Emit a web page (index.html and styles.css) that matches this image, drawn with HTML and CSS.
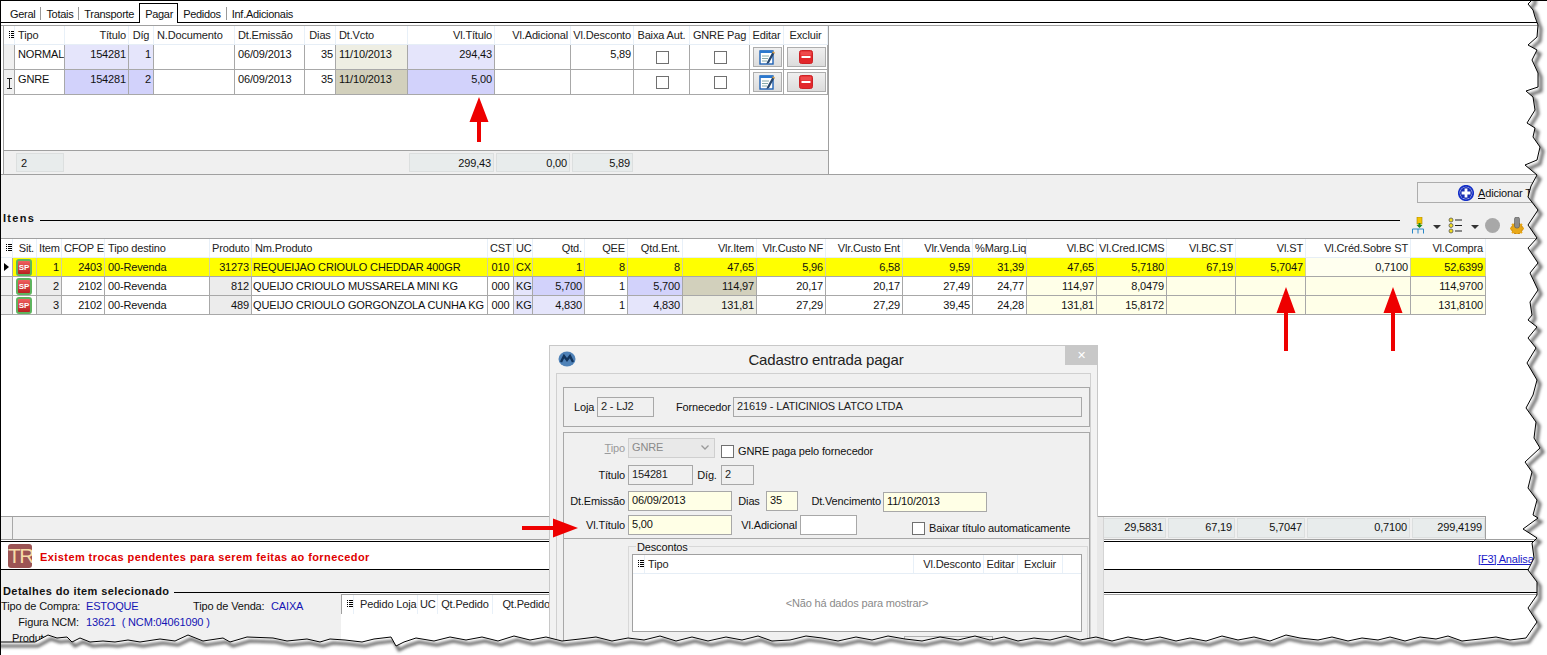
FILE: index.html
```html
<!DOCTYPE html>
<html lang="pt-BR">
<head>
<meta charset="utf-8">
<title>Cadastro entrada pagar</title>
<link rel="stylesheet" href="styles.css">
</head>
<body>
<svg class="defs" width="0" height="0" aria-hidden="true">
  <symbol id="i-list" viewBox="0 0 6 8"><path d="M0 .5h1M2 .5h4M0 2.5h1M2 2.5h4M0 4.5h1M2 4.5h4M0 6.5h1M2 6.5h4" stroke="#000" fill="none"/></symbol>
  <symbol id="i-edit" viewBox="0 0 16 16"><rect x="1" y="2" width="13" height="13" fill="#fff" stroke="#1f62b5" stroke-width="1.4"/><rect x="1" y="1.5" width="13" height="2.5" fill="#2b78cf"/><path d="M3 7h7M3 9.5h6M3 12h5" stroke="#8aa" fill="none"/><path d="M8 13l5.5-10 2 1L10 14l-2.5 1z" fill="#27456b"/><path d="M13.5 3l2 1" stroke="#e0a040" stroke-width="1.4"/></symbol>
  <symbol id="i-del" viewBox="0 0 14 14"><rect x=".5" y=".5" width="13" height="13" rx="2" fill="#e2272b" stroke="#cc2226"/><rect x="1.500" y="1.500" width="11" height="4" rx="1" fill="#ee4a4c"/><rect x="2.500" y="6" width="9" height="2" fill="#fff"/></symbol>
</svg>
<div class="app">
  <nav class="tabs">
    <span class="tab">Geral</span><span class="tab sep">Totais</span><span class="tab sep">Transporte</span><span class="tab on">Pagar</span><span class="tab">Pedidos</span><span class="tab sep">Inf.Adicionais</span>
  </nav>
  <section class="pane">
    <div class="g1">
      <div class="rw g1c head">
        <div class="c hd"><svg class="ic-list"><use href="#i-list"/></svg></div><div class="c hd l">Tipo</div><div class="c hd r">Título</div><div class="c hd ctr">Díg</div><div class="c hd l">N.Documento</div><div class="c hd l">Dt.Emissão</div><div class="c hd ctr">Dias</div><div class="c hd l">Dt.Vcto</div><div class="c hd r">Vl.Título</div><div class="c hd r">Vl.Adicional</div><div class="c hd r">Vl.Desconto</div><div class="c hd ctr">Baixa Aut.</div><div class="c hd ctr">GNRE Pag</div><div class="c hd ctr">Editar</div><div class="c hd ctr">Excluir</div>
      </div>
      <div class="rw g1c tall">
        <div class="c ind"></div><div class="c l">NORMAL</div><div class="c r bl1">154281</div><div class="c r bl1">1</div><div class="c l"></div><div class="c l">06/09/2013</div><div class="c r">35</div><div class="c l kh1">11/10/2013</div><div class="c r bl1">294,43</div><div class="c r"></div><div class="c r">5,89</div><div class="c mid"><span class="chk"></span></div><div class="c mid"><span class="chk"></span></div><div class="c mid"><span class="btn be"><svg class="ic-edit"><use href="#i-edit"/></svg></span></div><div class="c mid"><span class="btn bd"><svg class="ic-del"><use href="#i-del"/></svg></span></div>
      </div>
      <div class="rw g1c tall">
        <div class="c ind mid"><svg class="ic-beam" viewBox="0 0 5 11"><path d="M0 .5h5M0 10.500h5M2.500 .5v10" stroke="#222" fill="none"/></svg></div><div class="c l">GNRE</div><div class="c r bl2">154281</div><div class="c r bl2">2</div><div class="c l"></div><div class="c l">06/09/2013</div><div class="c r">35</div><div class="c l kh2">11/10/2013</div><div class="c r bl2">5,00</div><div class="c r"></div><div class="c r"></div><div class="c mid"><span class="chk"></span></div><div class="c mid"><span class="chk"></span></div><div class="c mid"><span class="btn be"><svg class="ic-edit"><use href="#i-edit"/></svg></span></div><div class="c mid"><span class="btn bd"><svg class="ic-del"><use href="#i-del"/></svg></span></div>
      </div>
      <div class="g1-gap"></div>
      <div class="g1c g1foot">
        <div></div><div class="fc l">2</div><div class="s6"></div><div class="fc r">299,43</div><div class="fc r">0,00</div><div class="fc r">5,89</div>
      </div>
    </div>
  </section>
  <section class="band">
    <div class="addrow"><div class="addbtn">
      <svg class="ic-plus" viewBox="0 0 16 16"><circle cx="8" cy="8" r="7.200" fill="#fff" stroke="#1530c8" stroke-width="1.800"/><circle cx="8" cy="8" r="6" fill="#1a2fb4"/><path d="M8 3.600v8.800M3.600 8h8.800" stroke="#fff" stroke-width="2.800"/></svg>
      <span><u>A</u>dicionar Troca</span>
    </div></div>
    <div class="itens-head">
      <strong class="h-text">Itens</strong>
      <div class="h-line"></div>
      <svg class="tools" viewBox="0 0 115 17" width="115" height="17">
        <rect x="5" y="0" width="5" height="7" fill="#f2c400" stroke="#a88400" stroke-width=".6"/>
        <path d="M7.500 6v4" stroke="#1a8a1a" stroke-width="2"/><path d="M4.500 8h6l-3 3z" fill="#1a8a1a"/>
        <path d="M.5 16.500v-4.500h11v4.500M6 12v4.500" fill="none" stroke="#2a88c8"/>
        <path d="M21 8h8l-4 4z" fill="#333"/>
        <circle cx="39" cy="3" r="2" fill="#f2dc20" stroke="#555" stroke-width=".8"/><circle cx="39" cy="8.500" r="2" fill="#f2dc20" stroke="#555" stroke-width=".8"/><circle cx="39" cy="14" r="2" fill="#f2dc20" stroke="#555" stroke-width=".8"/>
        <path d="M43 3h7M43 8.500h7M43 14h7" stroke="#222" stroke-width="1.200"/>
        <path d="M59 8h8l-4 4z" fill="#333"/>
        <circle cx="80.500" cy="8.500" r="7.500" fill="#a8a8a8"/>
        <circle cx="105" cy="11.500" r="5.500" fill="#e8a818" stroke="#c07c08"/>
        <path d="M98 11.500h14M105 4.500v14M100 7l10 9M110 7l-10 9" stroke="#e8a818" stroke-width="2"/>
        <rect x="102.500" y="0" width="5" height="11" rx="2" fill="#8c8c8c" stroke="#555" stroke-width=".6"/>
      </svg>
    </div>
  </section>
  <section class="items">
    <div class="g2">
      <div class="rw g2c head">
        <div class="c hd"><svg class="ic-list"><use href="#i-list"/></svg></div><div class="c hd r">Sit.</div><div class="c hd r">Item</div><div class="c hd r">CFOP E</div><div class="c hd l">Tipo destino</div><div class="c hd r">Produto</div><div class="c hd l">Nm.Produto</div><div class="c hd ctr">CST</div><div class="c hd ctr">UC</div><div class="c hd r">Qtd.</div><div class="c hd r">QEE</div><div class="c hd r">Qtd.Ent.</div><div class="c hd r">Vlr.Item</div><div class="c hd r">Vlr.Custo NF</div><div class="c hd r">Vlr.Custo Ent</div><div class="c hd r">Vlr.Venda</div><div class="c hd r">%Marg.Liq</div><div class="c hd r">Vl.BC</div><div class="c hd r">Vl.Cred.ICMS</div><div class="c hd r">Vl.BC.ST</div><div class="c hd r">Vl.ST</div><div class="c hd r">Vl.Créd.Sobre ST</div><div class="c hd r">Vl.Compra</div>
      </div>
      <div class="rw g2c cur">
        <div class="c ind mid"><span class="tri"></span></div><div class="c mid yl"><span class="sp">SP</span></div><div class="c r yl">1</div><div class="c r yl">2403</div><div class="c l yl">00-Revenda</div><div class="c r yl">31273</div><div class="c nm yl">REQUEIJAO CRIOULO CHEDDAR 400GR</div><div class="c ctr yl">010</div><div class="c ctr yl">CX</div><div class="c r yl">1</div><div class="c r yl">8</div><div class="c r yl">8</div><div class="c r yl">47,65</div><div class="c r yl">5,96</div><div class="c r yl">6,58</div><div class="c r yl">9,59</div><div class="c r yl">31,39</div><div class="c r yl">47,65</div><div class="c r yl">5,7180</div><div class="c r yl">67,19</div><div class="c r yl">5,7047</div><div class="c r pale">0,7100</div><div class="c r yl">52,6399</div>
      </div>
      <div class="rw g2c">
        <div class="c ind"></div><div class="c mid"><span class="sp">SP</span></div><div class="c r gy">2</div><div class="c r">2102</div><div class="c l">00-Revenda</div><div class="c r gy">812</div><div class="c nm">QUEIJO CRIOULO MUSSARELA MINI KG</div><div class="c ctr">000</div><div class="c ctr bl1">KG</div><div class="c r bl2">5,700</div><div class="c r">1</div><div class="c r bl2">5,700</div><div class="c r kh2">114,97</div><div class="c r">20,17</div><div class="c r">20,17</div><div class="c r">27,49</div><div class="c r">24,77</div><div class="c r cr">114,97</div><div class="c r cr">8,0479</div><div class="c r cr"></div><div class="c r cr"></div><div class="c r cr"></div><div class="c r cr">114,9700</div>
      </div>
      <div class="rw g2c">
        <div class="c ind"></div><div class="c mid"><span class="sp">SP</span></div><div class="c r gy">3</div><div class="c r">2102</div><div class="c l">00-Revenda</div><div class="c r gy">489</div><div class="c nm">QUEIJO CRIOULO GORGONZOLA CUNHA KG</div><div class="c ctr">000</div><div class="c ctr bl1">KG</div><div class="c r bl1">4,830</div><div class="c r">1</div><div class="c r bl1">4,830</div><div class="c r kh1">131,81</div><div class="c r">27,29</div><div class="c r">27,29</div><div class="c r">39,45</div><div class="c r">24,28</div><div class="c r cr">131,81</div><div class="c r cr">15,8172</div><div class="c r cr"></div><div class="c r cr"></div><div class="c r cr"></div><div class="c r cr">131,8100</div>
      </div>
    </div>
  </section>
  <div class="f2wrap">
    <div class="g2c f2">
      <div class="f2first"></div><div class="s17"></div><div class="fc r">29,5831</div><div class="fc r">67,19</div><div class="fc r">5,7047</div><div class="fc r">0,7100</div><div class="fc r">299,4199</div>
    </div>
  </div>
  <section class="alert">
    <span class="tr">TR</span>
    <strong class="alert-text">Existem trocas pendentes para serem feitas ao fornecedor</strong>
    <a class="f3">[F3] Analisar troca</a>
  </section>
  <section class="det">
    <div class="det-head"><strong class="det-title">Detalhes do item selecionado</strong><div class="det-line"></div></div>
    <div class="det-body">
      <div class="info">
        <div class="ir"><span class="il">Tipo de Compra:</span><span class="iv iv-a">ESTOQUE</span><span class="il2">Tipo de Venda:</span><span class="iv">CAIXA</span></div>
        <div class="ir"><span class="il">Figura NCM:</span><span class="iv">13621&nbsp; ( NCM:04061090 )</span></div>
        <div class="ir prod">Produto</div>
      </div>
      <div class="dl-wrap">
        <div class="dl-head">
          <div class="c hd"><svg class="ic-list"><use href="#i-list"/></svg></div><div class="c hd l2">Pedido Loja</div><div class="c hd ctr">UC</div><div class="c hd ctr">Qt.Pedido</div><div class="c hd r">Qt.Pedido</div>
        </div>
      </div>
    </div>
  </section>

  <aside class="dlg">
    <header class="dlg-title">
      <svg class="dlg-logo" viewBox="0 0 18 16"><ellipse cx="9" cy="8" rx="8.500" ry="7.500" fill="#4f82b8"/><path d="M3 11l3-6 3 4 3-4 3 6" fill="none" stroke="#12345c" stroke-width="2.400"/></svg>
      <span class="dlg-name">Cadastro entrada pagar</span>
      <span class="dlg-x">✕</span>
    </header>
    <div class="dlg-frame">
      <div class="grp grp1">
        <span class="lb-a">Loja</span><span class="fd fd-ro w57">2 - LJ2</span>
        <span class="lb-b">Fornecedor</span><span class="fd fd-ro w349">21619 - LATICINIOS LATCO LTDA</span>
      </div>
      <div class="grp grp2">
        <div class="frow ra">
          <span class="lb dis"><u>T</u>ipo</span><span class="fd combo w87">GNRE<svg class="chev" viewBox="0 0 8 5"><path d="M.5 .5L4 4l3.500-3.500" fill="none" stroke="#9a9a9a" stroke-width="1.300"/></svg></span>
          <span class="chk ck-a"></span><span class="ck-l">GNRE paga pelo fornecedor</span>
        </div>
        <div class="frow rb">
          <span class="lb">Título</span><span class="fd fd-ro w65">154281</span>
          <span class="lb-c">Díg.</span><span class="fd fd-ro w33">2</span>
        </div>
        <div class="frow rc">
          <span class="lb">Dt.Emissão</span><span class="fd fd-y w104">06/09/2013</span>
          <span class="lb-d">Dias</span><span class="fd fd-y w32">35</span>
          <span class="lb-e">Dt.Vencimento</span><span class="fd fd-y w104 off1">11/10/2013</span>
        </div>
        <div class="frow rd">
          <span class="lb">Vl.Título</span><span class="fd fd-y w104">5,00</span>
          <span class="lb-f">Vl.Adicional</span><span class="fd fd-w w57">&nbsp;</span>
          <span class="chk ck-b"></span><span class="ck-l">Baixar título automaticamente</span>
        </div>
        <div class="desc">
          <span class="desc-l">Descontos</span>
          <div class="dtable">
            <div class="dt-head">
              <div class="c hd"><svg class="ic-list"><use href="#i-list"/></svg></div><div class="c hd l">Tipo</div><div class="c hd r">Vl.Desconto</div><div class="c hd ctr">Editar</div><div class="c hd ctr">Excluir</div>
            </div>
            <div class="dt-empty">&lt;Não há dados para mostrar&gt;</div>
          </div>
          <div class="dlg-btn"></div>
        </div>
      </div>
    </div>
  </aside>

  <svg class="arrows" viewBox="0 0 1547 655" aria-hidden="true">
    <path d="M479 97l9.500 25h-7.500v20h-4v-20h-7.500z"/>
    <path d="M1286 287l9.500 26h-7.500v38h-4v-38h-7.500z"/>
    <path d="M1393 287l9.500 26h-7.500v38h-4v-38h-7.500z"/>
    <path d="M578 528l-25 9.500v-7.500h-31v-4h31v-7.500z"/>
  </svg>

  <svg class="tear" viewBox="0 0 1547 655" aria-hidden="true">
    <defs>
      <path id="edge" d="M1532 -10L1532 0L1528 4L1533 10L1535 17L1538 25L1537 37L1528 45L1537 50L1532 60L1538 73L1538 87L1526 91L1533 97L1535 110L1527 123L1535 128L1533 137L1540 147L1537 160L1525 165L1537 175L1531 186L1528 197L1538 210L1528 225L1537 238L1528 248L1538 263L1530 273L1538 290L1530 302L1532 315L1528 320L1537 327L1528 338L1536 348L1527 363L1537 380L1533 395L1526 408L1536 422L1534 438L1540 448L1525 462L1532 472L1528 488L1537 500L1533 515L1538 518L1523 529L1537 538L1532 543L1534 558L1528 570L1537 582L1537 595L1528 608L1537 622L1526 638L1510 640L1496 637L1480 639L1462 641L1448 636L1436 639L1420 637L1405 641L1390 637L1378 640L1362 638L1348 641L1332 637L1318 640L1300 638L1286 635L1270 641L1254 637L1238 640L1222 636L1206 641L1190 638L1176 641L1160 637L1144 640L1128 637L1112 641L1096 637L1080 640L1066 636L1050 640L1034 638L1018 641L1004 637L990 640L975 636L958 640L940 637L922 641L905 639L888 636L872 640L856 637L838 641L822 638L806 636L790 640L772 641L758 636L742 640L726 637L708 641L692 637L676 641L660 636L644 640L628 638L612 641L596 637L580 639L562 641L546 637L530 640L514 636L498 641L482 637L466 640L450 637L434 641L416 638L404 642L396 646L391 637L374 639L362 642L345 640L330 639L320 642L307 639L287 641L273 638L247 637L230 642L223 638L203 641L188 635L175 641L160 639L140 642L128 640L115 642L103 641L90 642L80 638L72 642L67 637L57 638L48 635L35 642L12 642L-10 642L-10 670L1560 670L1560 -10Z"/>
      <clipPath id="outside"><use href="#edge"/></clipPath>
    </defs>
    <use href="#edge" class="t-fill"/>
    <g clip-path="url(#outside)"><use href="#edge" class="t-shadow"/></g>
    <use href="#edge" class="t-line"/>
  </svg>
</div>
</body>
</html>
```

FILE: styles.css
```css
* { box-sizing: border-box; }
html, body { margin: 0; padding: 0; background: #fff; }
body { font: 11px/18px "Liberation Sans", Arial, sans-serif; letter-spacing: -.15px; color: #111; overflow: hidden; }
.defs { position: absolute; }
.app { position: relative; width: 1547px; height: 655px; overflow: hidden; border-left: 1px solid #000; border-top: 1px solid #000; background: #fff; }

/* tabs */
.tabs { display: flex; height: 22px; padding: 2px 0 0 4px; border-bottom: 1px solid #000; align-items: flex-start; letter-spacing: -.3px; }
.tab { padding: 4px 5px 0; line-height: 14px; position: relative; }
.tab.sep { border-left: 1px solid #999; margin-top: 4px; padding-top: 0; height: 13px; line-height: 14px; }
.tab.on { border: 1px solid #000; border-bottom: 0; background: #fff; padding: 3px 5px 0; height: 20px; margin: 0 0 -1px 0; width: 39px; z-index: 1; }

/* top pane */
.pane { margin-top: 2px; border-top: 1px solid #a0a0a0; border-bottom: 1px solid #a0a0a0; height: 150px; }
.g1 { margin-left: 2px; width: 826px; height: 148px; border-left: 1px solid #a0a0a0; border-right: 1px solid #a0a0a0; display: flex; flex-direction: column; }
.g1c { display: grid; grid-template-columns: 11px 50px 64px 25px 81px 70px 31px 72px 87px 76px 63px 56px 60px 34px 44px; }
.g1-gap { flex: 1; }
.g1foot { height: 24px; background: #f0f0f0; border-top: 1px solid #a0a0a0; }
.s6 { grid-column: span 6; }
.s17 { grid-column: span 17; }
.fc { margin: 2px 1px; background: #e8ecec; border: 1px solid #dcdfdf; line-height: 18px; padding: 0 2px; overflow: hidden; }
.fc.l { padding-left: 4px; }

/* grid shared */
.rw { display: grid; height: 19px; border-bottom: 1px solid #a8a8a8; }
.rw.head { border-bottom: 1px solid #e6eef6; }
.rw.tall { height: 25px; }
.c { border-right: 1px solid #a8a8a8; padding: 0 2px; white-space: nowrap; overflow: hidden; line-height: 18px; }
.hd { border-right-color: #e8f0f8; color: #222; }
.l { text-align: left; padding-left: 3px; }
.nm { text-align: left; padding-left: 1px; }
.hd.nm { padding-left: 3px; }
.l2 { text-align: left; padding-left: 6px; }
.r { text-align: right; }
.ctr { text-align: center; }
.mid { display: flex; align-items: center; justify-content: center; padding: 0; }
.ind { background: #f0f0f0; padding: 0; }
.bl1 { background: #e5e5fb; }
.bl2 { background: #d2d2fb; }
.kh1 { background: #eeeee3; }
.kh2 { background: #d2d0bc; }
.gy { background: #ececec; }
.cr { background: #ffffe8; }
.yl { background: #ffff00; border-right-color: #d0d0a0; }
.pale { background: #ffffef; border-right-color: #d0d0a0; }
.cur .ind { background: #fff; }

.ic-list { display: block; width: 6px; height: 8px; margin: 5px 0 0 3px; }
.ic-beam { width: 5px; height: 11px; margin-top: 2px; }
.tri { width: 0; height: 0; border-left: 5px solid #000; border-top: 4px solid transparent; border-bottom: 4px solid transparent; }
.chk { display: inline-block; flex: none; width: 13px; height: 13px; border: 1px solid #707070; background: #fff; }
.mid > .chk { margin-left: 1px; }
.btn { display: flex; align-items: center; justify-content: center; height: 20px; margin-left: 1px; border: 1px solid #adadad; background: linear-gradient(#efefef, #dcdcdc); }
.be { width: 29px; }
.bd { width: 39px; }
.ic-edit { width: 16px; height: 16px; }
.ic-del { width: 14px; height: 14px; }
.sp { display: block; width: 16px; height: 17px; margin-right: 1px; border: 2px solid #5fb45f; border-radius: 3px; background: linear-gradient(#f06060, #b82020); color: #fff; font-size: 8px; font-weight: 700; line-height: 13px; text-align: center; letter-spacing: -.2px; }

/* grey band */
.band { height: 63px; background: #f0f0f0; padding-top: 7px; }
.addrow { display: flex; justify-content: flex-end; }
.addbtn { width: 130px; height: 21px; display: flex; align-items: center; gap: 4px; padding-left: 40px; border: 1px solid #adadad; border-right: 0; background: #f0f0f0; white-space: nowrap; overflow: hidden; }
.ic-plus { width: 16px; height: 16px; flex: none; }
.itens-head { display: flex; align-items: flex-start; height: 35px; }
.h-text { margin: 8px 0 0 2px; line-height: 14px; letter-spacing: 1.3px; width: 37px; color: #111; }
.h-line { flex: 1; height: 1px; background: #000; margin-top: 17px; }
.tools { margin: 14px 20px 0 12px; flex: none; }

/* items */
.items { height: 278px; border-top: 1px solid #a0a0a0; }
.g2 { width: 1485px; }
.g2c { grid-template-columns: 12px 24px 25px 43px 105px 42px 236px 26px 19px 52px 43px 55px 74px 69px 77px 70px 54px 70px 70px 69px 70px 105px 75px; }
.f2wrap { height: 24px; border-bottom: 1px solid #a0a0a0; }
.f2 { display: grid; width: 1485px; height: 23px; background: #f0f0f0; border-top: 1px solid #a0a0a0; border-right: 1px solid #a0a0a0; }
.f2 .fc { margin: 1px; line-height: 17px; }
.f2first { border-right: 1px solid #a8a8a8; }

/* alert */
.alert { display: flex; align-items: center; height: 29px; margin-top: 1px; border-top: 1px solid #000; border-bottom: 1px solid #000; }
.tr { width: 24px; height: 24px; margin-left: 7px; flex: none; border-radius: 3px; background: #9c5454; color: #f6dca8; font-size: 21px; line-height: 24px; text-align: center; letter-spacing: -1.5px; overflow: hidden; }
.alert-text { margin-left: 8px; padding-top: 2px; color: #e00000; letter-spacing: .42px; white-space: nowrap; }
.f3 { margin-left: auto; width: 69px; white-space: nowrap; overflow: hidden; color: #1a1ac8; text-decoration: underline; padding-top: 7px; line-height: 15px; }

/* details */
.det { background: #f0f0f0; height: 85px; }
.det-head { display: flex; height: 23px; }
.det-title { margin: 14px 5px 0 2px; line-height: 14px; white-space: nowrap; letter-spacing: .42px; }
.det-line { flex: 1; height: 1px; margin-top: 22px; background: #000; }
.det-body { display: flex; height: 62px; }
.info { width: 340px; padding-top: 5px; flex: none; }
.ir { display: flex; height: 16px; line-height: 16px; white-space: nowrap; }
.il { width: 78px; text-align: right; }
.iv { margin-left: 7px; color: #1414b4; }
.iv-a { width: 107px; }
.il2 { width: 71px; text-align: right; }
.prod { padding-left: 11px; }
.dl-wrap { flex: 1; background: #fff; padding-top: 1px; }
.dl-head { display: grid; grid-template-columns: 12px 64px 20px 55px 60px; height: 20px; border-top: 1px solid #a0a0a0; border-left: 1px solid #a0a0a0; }

/* dialog */
.dlg { position: absolute; left: 548px; top: 344px; width: 549px; height: 320px; background: #f2f2f2; border: 1px solid #c8c8c8; padding: 0 6px; }
.dlg::after { content: ""; position: absolute; left: 100%; top: 171px; bottom: 0; width: 6px; background: #e8e8e8; border-right: 1px solid #d4d4d4; }
.dlg-title { position: relative; height: 27px; display: flex; align-items: center; justify-content: center; }
.dlg-logo { position: absolute; left: 2px; top: 5px; width: 18px; height: 16px; }
.dlg-name { font-size: 15px; color: #222; line-height: 27px; margin-left: 5px; }
.dlg-x { position: absolute; right: -6px; top: 0; width: 32px; height: 19px; background: #c8c8c8; color: #fff; font-size: 11px; line-height: 18px; text-align: center; }
.dlg-frame { height: 290px; background: #f0f0f0; border: 1px solid #d0d0d0; padding: 13px 0 0 6px; }
.grp { border: 1px solid #a8a8a8; width: 527px; }
.grp1 { display: flex; align-items: center; height: 40px; padding-left: 10px; }
.lb-a { width: 23px; }
.lb-b { width: 57px; margin-left: 22px; white-space: nowrap; }
.fd { display: block; flex: none; height: 20px; line-height: 16px; padding-left: 3px; border: 1px solid #a8a8a8; white-space: nowrap; overflow: hidden; }
.fd-ro { background: #f0f0f0; color: #222; }
.fd-y { background: #ffffe6; }
.fd-w { background: #fff; }
.w32 { width: 32px; } .w33 { width: 33px; } .w57 { width: 57px; } .w65 { width: 65px; } .w87 { width: 87px; } .w104 { width: 104px; } .w349 { width: 349px; }
.grp2 { margin-top: 5px; height: 260px; }
.frow { display: flex; align-items: center; height: 20px; }
.ra { margin-top: 5px; }
.rb { margin-top: 7px; }
.rc { margin-top: 6px; }
.rd { margin-top: 4px; }
.lb { width: 61px; margin-right: 3px; text-align: right; white-space: nowrap; flex: none; }
.dis { color: #9a9a9a; }
.combo { background: #e9e9e9; border-color: #cfcfcf; color: #8a8a8a; position: relative; }
.chev { position: absolute; right: 5px; top: 6px; width: 8px; height: 5px; }
.ck-a { margin: 6px 0 0 6px; }
.ck-l { margin: 6px 0 0 4px; white-space: nowrap; }
.lb-c { width: 28px; text-align: center; }
.lb-d { width: 34px; text-align: center; }
.lb-e { width: 83px; text-align: right; margin-right: 2px; white-space: nowrap; }
.lb-f { width: 68px; text-align: right; white-space: nowrap; padding-right: 3px; }
.off1 { margin-top: 2px; }
.ck-b { margin: 6px 0 0 55px; }
.desc { margin: 3px 0 0 0; padding: 8px 3px 0 64px; border-top: 1px solid #a8a8a8; position: relative; }
.desc::before { content: ""; position: absolute; left: 64px; top: 7px; width: 458px; height: 100px; border: 1px solid #d8d8d8; }
.desc-l { position: relative; top: -4px; display: block; width: fit-content; margin-left: 8px; padding: 0 1px; background: #f0f0f0; line-height: 9px; height: 7px; }
.dtable { position: relative; margin-left: 4px; width: 450px; height: 78px; background: #fff; border: 1px solid #a0a0a0; }
.dt-head { display: grid; grid-template-columns: 12px 269px 70px 34px 45px; height: 19px; border-bottom: 1px solid #e6eef6; }
.dt-empty { height: 57px; line-height: 58px; text-align: center; color: #8a8a8a; }
.dlg-btn { position: relative; width: 89px; height: 10px; margin: 4px 0 0 276px; border: 1px solid #b0b0b0; background: #eee; }

/* overlays */
.arrows { position: absolute; left: -1px; top: -1px; width: 1547px; height: 655px; fill: #ee0000; pointer-events: none; }
.tear { position: absolute; left: -1px; top: -1px; width: 1547px; height: 655px; pointer-events: none; }
.t-fill { fill: #fff; stroke: none; }
.t-shadow { fill: none; stroke: #666; stroke-width: 3px; transform: translate(3px, 4px); filter: blur(1.5px); }
.t-line { fill: none; stroke: #000; stroke-width: 1px; }
```
